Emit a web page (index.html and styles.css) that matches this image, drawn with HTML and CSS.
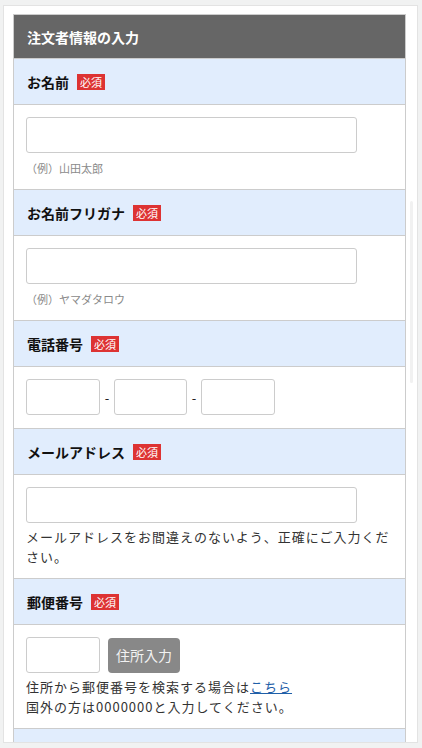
FILE: index.html
```html
<!DOCTYPE html>
<html lang="ja">
<head>
<meta charset="utf-8">
<title>注文者情報の入力</title>
<link rel="stylesheet" href="styles.css">
</head>
<body>
<div class="card">
  <div class="scroll-track"></div>
  <div class="form">
    <div class="form-head">注文者情報の入力</div>

    <div class="label-row"><span class="label">お名前</span><span class="req">必須</span></div>
    <div class="field-row tall">
      <div class="input wide"></div>
      <div class="hint">（例）山田太郎</div>
    </div>

    <div class="label-row"><span class="label">お名前フリガナ</span><span class="req">必須</span></div>
    <div class="field-row tall">
      <div class="input wide"></div>
      <div class="hint">（例）ヤマダタロウ</div>
    </div>

    <div class="label-row"><span class="label">電話番号</span><span class="req">必須</span></div>
    <div class="field-row tel">
      <div class="inline">
        <div class="input short"></div>
        <span class="dash">-</span>
        <div class="input short narrow"></div>
        <span class="dash">-</span>
        <div class="input short"></div>
      </div>
    </div>

    <div class="label-row"><span class="label">メールアドレス</span><span class="req">必須</span></div>
    <div class="field-row note">
      <div class="input wide"></div>
      <p class="text">メールアドレスをお間違えのないよう、正確にご入力ください。</p>
    </div>

    <div class="label-row"><span class="label">郵便番号</span><span class="req">必須</span></div>
    <div class="field-row note">
      <div class="inline gap">
        <div class="input short"></div>
        <span class="btn">住所入力</span>
      </div>
      <p class="text">住所から郵便番号を検索する場合は<a class="link" href="#">こちら</a><br>国外の方は0000000と入力してください。</p>
    </div>

    <div class="label-row"></div>
  </div>
</div>
</body>
</html>
```

FILE: styles.css
```css
* { box-sizing: border-box; }

html, body {
  margin: 0;
  padding: 0;
}

body {
  background: #f1f2f2;
  font-family: "Noto Sans CJK JP", "Noto Sans", sans-serif;
  color: #222;
  padding: 5px 0 0 3px;
  height: 748px;
  overflow: hidden;
}

.card {
  position: relative;
  width: 415px;
  height: 738px;
  background: #fff;
  border: 1px solid #e3e3e3;
  padding: 8px 11px 0 9px;
  overflow: hidden;
}

.scroll-track {
  position: absolute;
  left: 406px;
  top: 195px;
  width: 3px;
  height: 182px;
  background: #f1f1f1;
  border-radius: 2px;
}

.form {
  width: 393px;
  border: 1px solid #cccccc;
  border-bottom: none;
}

.form-head {
  height: 44px;
  background: #666666;
  color: #fff;
  font-weight: bold;
  font-size: 14px;
  padding-left: 13px;
  display: flex;
  align-items: center;
  border-bottom: 1px solid #cccccc;
}

.label-row {
  height: 46px;
  background: #e1edfd;
  border-bottom: 1px solid #cccccc;
  display: flex;
  align-items: center;
  padding-left: 13px;
  gap: 8px;
}

.label {
  font-size: 14px;
  font-weight: bold;
  color: #111;
}

.req {
  background: #dd3333;
  color: #fff;
  font-size: 11px;
  line-height: 16px;
  height: 16px;
  padding: 0 3px;
}

.field-row {
  border-bottom: 1px solid #cccccc;
  padding: 12px 12px 0 12px;
}

.field-row.tall { height: 85px; }
.field-row.tel { height: 62px; }
.field-row.note { height: 104px; }

.input {
  height: 36px;
  border: 1px solid #cccccc;
  border-radius: 3px;
  background: #fff;
}

.input.wide { width: 331px; }
.input.short { width: 74px; }
.input.narrow { width: 73px; }

.hint {
  margin-top: 7px;
  font-size: 11px;
  line-height: 16px;
  color: #8a8a8a;
}

.inline {
  display: flex;
  align-items: center;
}

.inline.gap { gap: 8px; }

.dash {
  width: 14px;
  text-align: center;
  font-size: 13px;
  color: #222;
}

.text {
  margin: 4px 0 0 0;
  font-size: 13px;
  letter-spacing: 1px;
  line-height: 19.5px;
  color: #333;
}

.link {
  color: #1f5fa8;
  text-decoration: underline;
}

.btn {
  width: 72px;
  height: 35px;
  background: #888888;
  color: #f2f2f2;
  font-size: 14px;
  border-radius: 4px;
  display: flex;
  align-items: center;
  justify-content: center;
}
```
